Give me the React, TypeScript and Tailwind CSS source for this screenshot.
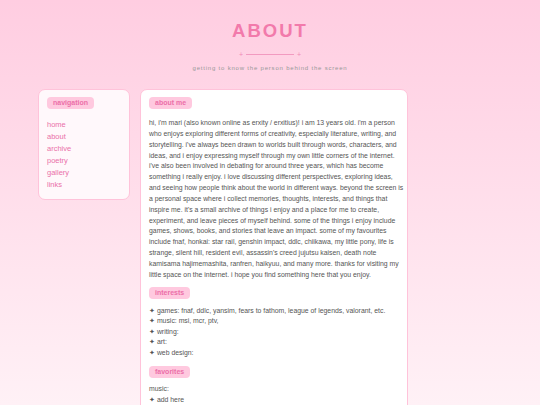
const links = ['home', 'about', 'archive', 'poetry', 'gallery', 'links']

const interests = [
  'games: fnaf, ddlc, yansim, fears to fathom, league of legends, valorant, etc.',
  'music: msi, mcr, ptv,',
  'writing:',
  'art:',
  'web design:',
]

function Pill({ children }: { children: React.ReactNode }) {
  return (
    <span className="block w-fit rounded-[4px] bg-[#ffc9df] px-[6px] py-[2px] text-[7px] font-bold leading-[8px] text-[#ec6fa8]">
      {children}
    </span>
  )
}

export default function App() {
  return (
    <div
      className="h-[405px] w-[540px] overflow-hidden bg-gradient-to-b from-[#ffcde1] to-[#fff1f6] text-[#555]"
      style={{ fontFamily: '"Liberation Sans", Arial, sans-serif' }}
    >
      <header className="flex flex-col items-center pt-[21px]">
        <h1 className="text-[18.5px] font-bold leading-[19px] tracking-[2px] text-[#f27aab]">ABOUT</h1>
        <div className="mt-[11px] flex items-center gap-[3px] text-[7px] leading-[7px] text-[#f08cb5]">
          <span>+</span>
          <span className="h-px w-[48px] bg-[#f29ac0]" />
          <span>+</span>
        </div>
        <p className="mt-[7px] text-[6px] leading-[7px] tracking-[0.8px] text-[#999]">
          getting to know the person behind the screen
        </p>
      </header>

      <main className="mt-[17px] flex items-start gap-[10px] pl-[38px]">
        <aside className="w-[92px] rounded-[7px] border-[1.5px] border-[#ffc3da] bg-[#fff8fb] px-[8px] pb-[10px] pt-[7px]">
          <Pill>navigation</Pill>
          <ul className="mt-[11px] flex flex-col gap-[3px] text-[7.5px] leading-[9px] text-[#ea70a9]">
            {links.map((l) => (
              <li key={l}>{l}</li>
            ))}
          </ul>
        </aside>

        <section className="w-[268px] rounded-[7px] border-[1.5px] border-[#ffc3da] bg-white pl-[8px] pr-[2px] pt-[7px] pb-[20px]">
          <Pill>about me</Pill>
          <p className="mt-[9px] text-[6.86px] leading-[10.85px] text-[#555]">
            hi, i'm mari (also known online as erxity / erxitius)! i am 13 years old. i'm a person who enjoys
            exploring different forms of creativity, especially literature, writing, and storytelling. i've always
            been drawn to worlds built through words, characters, and ideas, and i enjoy expressing myself through my
            own little corners of the internet. i've also been involved in debating for around three years, which has
            become something i really enjoy. i love discussing different perspectives, exploring ideas, and seeing how
            people think about the world in different ways. beyond the screen is a personal space where i collect
            memories, thoughts, interests, and things that inspire me. it's a small archive of things i enjoy and a
            place for me to create, experiment, and leave pieces of myself behind. some of the things i enjoy include
            games, shows, books, and stories that leave an impact. some of my favourites include fnaf, honkai: star
            rail, genshin impact, ddlc, chiikawa, my little pony, life is strange, silent hill, resident evil,
            assassin's creed jujutsu kaisen, death note kamisama hajimemashita, ranfren, haikyuu, and many more.
            thanks for visiting my little space on the internet. i hope you find something here that you enjoy.
          </p>

          <div className="mt-[6.5px]">
            <Pill>interests</Pill>
          </div>
          <ul className="mt-[6.5px] text-[6.86px] leading-[10.6px]">
            {interests.map((i) => (
              <li key={i}>✦ {i}</li>
            ))}
          </ul>

          <div className="mt-[7px]">
            <Pill>favorites</Pill>
          </div>
          <div className="mt-[6.5px] text-[6.86px] leading-[10.6px]">
            <p>music:</p>
            <p>✦ add here</p>
          </div>
        </section>
      </main>
    </div>
  )
}
